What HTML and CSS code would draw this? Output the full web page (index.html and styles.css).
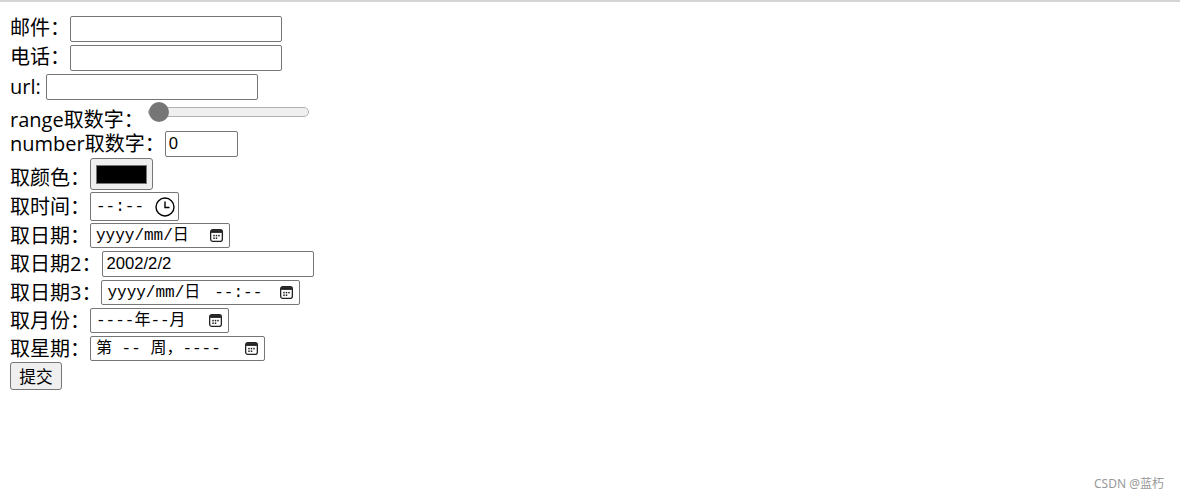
FILE: index.html
```html
<!DOCTYPE html>
<html lang="zh-CN">
<head>
<meta charset="utf-8">
<title>表单</title>
<link rel="stylesheet" href="styles.css">
</head>
<body>
<div class="topline"></div>
<form class="form" onsubmit="return false">
  <div class="row h26"><label class="lbl up">邮件：</label><input class="txt w212" type="text"></div>
  <div class="row h26 g3"><label class="lbl up">电话：</label><input class="txt w212" type="text"></div>
  <div class="row h26 g3"><label class="lbl sp">url:</label><input class="txt w212" type="text"></div>
  <div class="row row-range g1"><label class="lbl lbl-range">range取数字：</label><input class="range" type="range" min="0" max="100" value="0"></div>
  <div class="row h26"><label class="lbl">number取数字：</label><input class="txt w73" type="text" value="0"></div>
  <div class="row h32 g1"><label class="lbl down">取颜色：</label><div class="color"><span class="swatch"></span></div></div>
  <div class="row h29 g2"><label class="lbl">取时间：</label>
    <div class="fld fld-time"><span class="ph">--:--</span>
      <svg class="clock" width="20" height="20" viewBox="0 0 20 20"><circle cx="10" cy="10" r="9" fill="none" stroke="#000" stroke-width="1.4"/><path d="M10 4.5V10.5H14.5" fill="none" stroke="#000" stroke-width="1.4"/></svg>
    </div>
  </div>
  <div class="row h25 g2"><label class="lbl">取日期：</label>
    <div class="fld w140"><span class="ph">yyyy/mm/日</span>
      <svg class="cal" width="13" height="13" viewBox="0 0 12 12"><rect x="0.6" y="0.6" width="10.8" height="10.8" rx="2" fill="none" stroke="#222" stroke-width="1.2"/><rect x="1" y="1" width="10" height="2.6" fill="#222"/><rect x="3" y="5.4" width="1.4" height="1.4" fill="#222"/><rect x="5.3" y="5.4" width="1.4" height="1.4" fill="#222"/><rect x="7.6" y="5.4" width="1.4" height="1.4" fill="#222"/><rect x="3" y="7.8" width="1.4" height="1.4" fill="#222"/><rect x="5.3" y="7.8" width="1.4" height="1.4" fill="#222"/></svg>
    </div>
  </div>
  <div class="row h26 g3"><label class="lbl n2">取日期2：</label><input class="txt w212" type="text" value="2002/2/2"></div>
  <div class="row h25 g3"><label class="lbl">取日期3：</label>
    <div class="fld w199"><span class="ph">yyyy/mm/日<span class="tpart">--:--</span></span>
      <svg class="cal" width="13" height="13" viewBox="0 0 12 12"><rect x="0.6" y="0.6" width="10.8" height="10.8" rx="2" fill="none" stroke="#222" stroke-width="1.2"/><rect x="1" y="1" width="10" height="2.6" fill="#222"/><rect x="3" y="5.4" width="1.4" height="1.4" fill="#222"/><rect x="5.3" y="5.4" width="1.4" height="1.4" fill="#222"/><rect x="7.6" y="5.4" width="1.4" height="1.4" fill="#222"/><rect x="3" y="7.8" width="1.4" height="1.4" fill="#222"/><rect x="5.3" y="7.8" width="1.4" height="1.4" fill="#222"/></svg>
    </div>
  </div>
  <div class="row h25 g3"><label class="lbl">取月份：</label>
    <div class="fld w139"><span class="ph">----年--月</span>
      <svg class="cal" width="13" height="13" viewBox="0 0 12 12"><rect x="0.6" y="0.6" width="10.8" height="10.8" rx="2" fill="none" stroke="#222" stroke-width="1.2"/><rect x="1" y="1" width="10" height="2.6" fill="#222"/><rect x="3" y="5.4" width="1.4" height="1.4" fill="#222"/><rect x="5.3" y="5.4" width="1.4" height="1.4" fill="#222"/><rect x="7.6" y="5.4" width="1.4" height="1.4" fill="#222"/><rect x="3" y="7.8" width="1.4" height="1.4" fill="#222"/><rect x="5.3" y="7.8" width="1.4" height="1.4" fill="#222"/></svg>
    </div>
  </div>
  <div class="row h25 g3"><label class="lbl">取星期：</label>
    <div class="fld w175"><span class="ph">第 -- 周，----</span>
      <svg class="cal" width="13" height="13" viewBox="0 0 12 12"><rect x="0.6" y="0.6" width="10.8" height="10.8" rx="2" fill="none" stroke="#222" stroke-width="1.2"/><rect x="1" y="1" width="10" height="2.6" fill="#222"/><rect x="3" y="5.4" width="1.4" height="1.4" fill="#222"/><rect x="5.3" y="5.4" width="1.4" height="1.4" fill="#222"/><rect x="7.6" y="5.4" width="1.4" height="1.4" fill="#222"/><rect x="3" y="7.8" width="1.4" height="1.4" fill="#222"/><rect x="5.3" y="7.8" width="1.4" height="1.4" fill="#222"/></svg>
    </div>
  </div>
  <div class="row h28 g1"><button class="btn" type="submit">提交</button></div>
</form>
<div class="watermark">CSDN @蓝朽</div>
</body>
</html>
```

FILE: styles.css
```css
html, body {
  margin: 0;
  padding: 0;
  background: #fff;
}
body {
  position: relative;
  height: 499px;
  overflow: hidden;
  color: #000;
  font-family: "Open Sans", "Noto Sans CJK SC", sans-serif;
}
.topline {
  height: 2px;
  background: #d4d4d4;
}
.form {
  display: flex;
  flex-direction: column;
  align-items: flex-start;
  padding: 14px 0 0 10px;
}
.row {
  display: flex;
  align-items: center;
}
.h25 { height: 25px; }
.h26 { height: 26px; }
.h28 { height: 28px; }
.h29 { height: 29px; }
.h32 { height: 32px; }
.g1 { margin-top: 1px; }
.g2 { margin-top: 2px; }
.g3 { margin-top: 3px; }

.lbl {
  font-size: 20px;
  line-height: 20px;
  white-space: nowrap;
}
.lbl.up { margin-bottom: 3px; }
.lbl.down { margin-top: 8px; }
.lbl.sp { margin-right: 5px; }
.lbl.n2 { margin-right: 1px; }

.txt {
  box-sizing: border-box;
  height: 26px;
  margin: 0;
  padding: 0 3px;
  border: 1px solid #767676;
  border-radius: 2px;
  background: #fff;
  font-family: "Liberation Sans", "Noto Sans CJK SC", sans-serif;
  font-size: 16.67px;
  color: #000;
  outline: none;
}
.w212 { width: 212px; }
.w73 { width: 73px; }

.row-range {
  height: 30px;
  align-items: flex-start;
}
.lbl-range { margin-top: 9px; }
.range {
  -webkit-appearance: none;
  appearance: none;
  width: 161px;
  height: 20px;
  margin: 1px 0 0 4px;
  padding: 0;
  background: transparent;
}
.range::-webkit-slider-runnable-track {
  height: 10px;
  box-sizing: border-box;
  background: #efefef;
  border: 1px solid #b2b2b2;
  border-radius: 5px;
}
.range::-webkit-slider-thumb {
  -webkit-appearance: none;
  width: 20px;
  height: 20px;
  margin-top: -6px;
  border-radius: 50%;
  background: #767676;
  border: none;
}

.color {
  box-sizing: border-box;
  width: 63px;
  height: 32px;
  display: flex;
  align-items: center;
  justify-content: center;
  background: #efefef;
  border: 1px solid #767676;
  border-radius: 3px;
}
.swatch {
  box-sizing: border-box;
  width: 51px;
  height: 19px;
  background: #000;
  border: 1px solid #777;
}

.fld {
  box-sizing: border-box;
  height: 25px;
  display: flex;
  align-items: center;
  justify-content: space-between;
  padding: 0 6px 0 5px;
  border: 1px solid #767676;
  border-radius: 2px;
  background: #fff;
  font-family: "Liberation Mono", "Noto Sans CJK SC", monospace;
  font-size: 16px;
  line-height: 20px;
  white-space: pre;
}
.fld-time {
  width: 89px;
  height: 29px;
  padding-right: 3px;
}
.w139 { width: 139px; }
.w140 { width: 140px; }
.w175 { width: 175px; }
.w199 { width: 199px; }
.ph { display: block; }
.tpart { margin-left: 14px; }
.clock, .cal { display: block; flex: none; }

.btn {
  box-sizing: border-box;
  width: 52px;
  height: 28px;
  margin: 0;
  padding: 0;
  background: #efefef;
  border: 1px solid #767676;
  border-radius: 3px;
  font-family: "Noto Sans CJK SC", sans-serif;
  font-size: 16.67px;
  line-height: 20px;
  color: #000;
}

.watermark {
  position: absolute;
  right: 16px;
  bottom: 8px;
  font-family: "Noto Sans", "Noto Sans CJK SC", sans-serif;
  font-size: 12px;
  line-height: 14px;
  color: #999;
}
```
